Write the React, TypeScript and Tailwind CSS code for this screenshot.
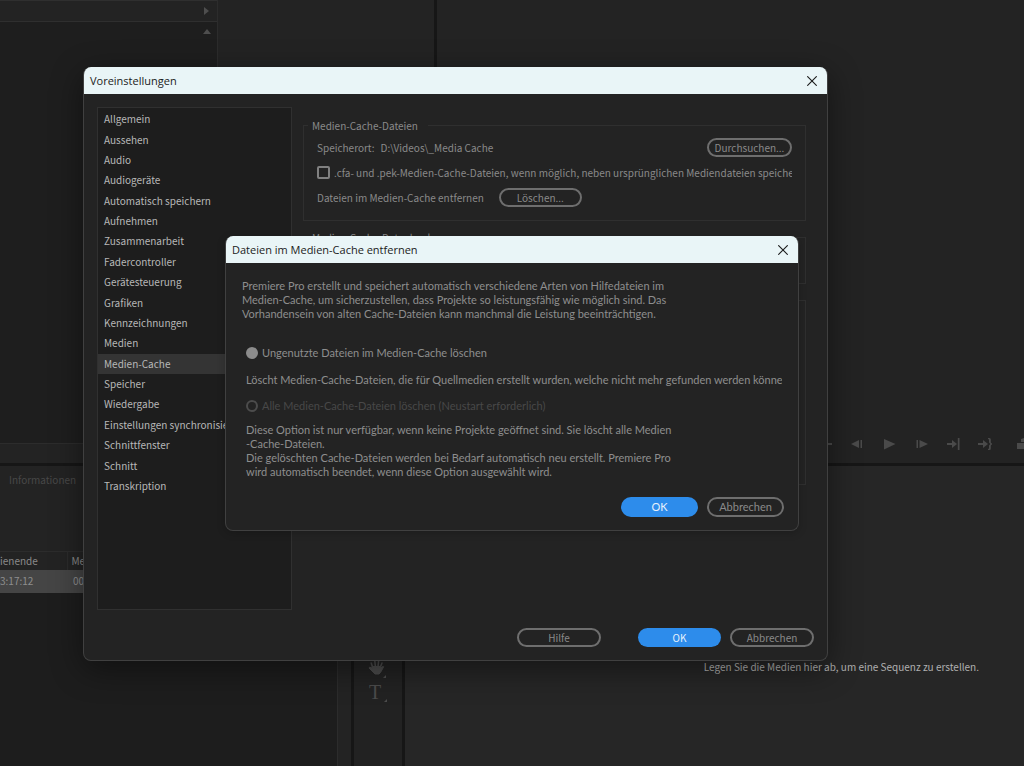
import React from "react";

const font = "font-['Noto_Sans_CJK_SC','Noto_Sans',sans-serif]";

const categories = [
  "Allgemein",
  "Aussehen",
  "Audio",
  "Audiogeräte",
  "Automatisch speichern",
  "Aufnehmen",
  "Zusammenarbeit",
  "Fadercontroller",
  "Gerätesteuerung",
  "Grafiken",
  "Kennzeichnungen",
  "Medien",
  "Medien-Cache",
  "Speicher",
  "Wiedergabe",
  "Einstellungen synchronisieren",
  "Schnittfenster",
  "Schnitt",
  "Transkription",
];

function PillButton({
  children,
  size,
  primary = false,
}: {
  children: React.ReactNode;
  size: string;
  primary?: boolean;
}) {
  const look = primary
    ? "bg-[#2d8ceb] text-[#e6f1fc]"
    : "border-2 border-[#6e6e6e] text-[#8a8a8a]";
  return (
    <button
      type="button"
      className={`flex shrink-0 items-center justify-center rounded-full leading-4 ${look} ${size}`}
    >
      {children}
    </button>
  );
}

function TitleBar({ title, id }: { title: string; id: string }) {
  return (
    <header className="flex h-[27px] shrink-0 items-center justify-between bg-[#e9f5f7] pr-2.5 pl-1.5 text-[#1b1b1b]">
      <h2 id={id} className="font-['Open_Sans',sans-serif] text-[11px] leading-4">
        {title}
      </h2>
      <button type="button" aria-label="Schließen" className="flex">
        <svg width="10" height="10" viewBox="0 0 10 10" fill="none" stroke="currentColor" strokeWidth="1.1">
          <path d="M0.3 0.3 9.7 9.7M9.7 0.3 0.3 9.7" />
        </svg>
      </button>
    </header>
  );
}

function Group({
  title,
  size,
  children,
}: {
  title: string;
  size: string;
  children?: React.ReactNode;
}) {
  return (
    <fieldset className={`min-w-0 border border-[#2f2f2f] pr-[13px] pl-[13px] ${size}`}>
      <legend className="-ml-[9px] h-4 pr-2.5 pl-1 leading-[18px]">{title}</legend>
      <div className="flex flex-col pt-0.5">{children}</div>
    </fieldset>
  );
}

function Transport() {
  return (
    <div className="flex h-4 items-center justify-end gap-4 text-[#4a4a4a]">
      <button type="button" aria-label="Zum In-Point" className="flex">
        <svg width="17" height="16" viewBox="0 0 17 16" fill="currentColor">
          <path d="M1 2h1.6v12H1zM4 8l5-4v3h7v2H9v3z" />
        </svg>
      </button>
      <button type="button" aria-label="Schritt zurück" className="flex">
        <svg width="16" height="16" viewBox="0 0 16 16" fill="currentColor">
          <path d="M2 8l8-4v8zM11.5 4h1.500v8h-1.500z" />
        </svg>
      </button>
      <button type="button" aria-label="Wiedergabe" className="flex">
        <svg width="16" height="16" viewBox="0 0 16 16" fill="currentColor">
          <path d="M3 3v10.500L14.500 8z" />
        </svg>
      </button>
      <button type="button" aria-label="Schritt vor" className="flex">
        <svg width="16" height="16" viewBox="0 0 16 16" fill="currentColor">
          <path d="M3.5 4H5v8H3.5zM6.5 4v8L15 8z" />
        </svg>
      </button>
      <button type="button" aria-label="Zum Out-Point" className="flex">
        <svg width="16" height="16" viewBox="0 0 16 16" fill="currentColor">
          <path d="M2 7h5V4l5 4-5 4V9H2zM12.8 2h1.7v12h-1.7z" />
        </svg>
      </button>
      <button type="button" aria-label="Zum Ende" className="flex">
        <svg width="16" height="16" viewBox="0 0 16 16" fill="currentColor">
          <path d="M1 7h5V4l5 4-5 4V9H1zM11 2h1.500q1.300 0 1.300 1.500V6.500L15.300 8l-1.500 1.500V12.500q0 1.500-1.300 1.500H11v-1.200h1V9.500L13.300 8 12 6.500V3.200h-1z" />
        </svg>
      </button>
      <button type="button" aria-label="Herausnehmen" className="ml-2 flex">
        <svg width="7" height="16" viewBox="0 0 7 16" fill="currentColor">
          <path d="M0 7h7v6H0zM4 3l3-1v4H4z" />
        </svg>
      </button>
    </div>
  );
}

function Workspace() {
  return (
    <div className="flex min-h-screen flex-col overflow-hidden bg-[#161616]">
      <div className="flex flex-[463_1_0px] gap-[3px]">
        <section className="flex w-[434px] flex-col bg-[#232323]">
          <div className="flex flex-1">
            <div className="flex w-[218px] flex-col border-r border-[#2c2c2c] bg-[#1e1e1e]">
              <div className="flex h-[22px] items-center justify-end border-t border-b border-[#2f2f2f] bg-[#232323] pr-2">
                <svg width="5" height="8" viewBox="0 0 5 8" fill="#4e4e4e">
                  <path d="M0 0v8l5-4z" />
                </svg>
              </div>
              <div className="flex justify-end pt-[7px] pr-1.5">
                <svg width="8" height="5" viewBox="0 0 8 5" fill="#4e4e4e">
                  <path d="M0 5h8L4 0z" />
                </svg>
              </div>
            </div>
          </div>
          <div className="h-5 border-t border-[#2c2c2c]" />
        </section>
        <section className="flex flex-1 flex-col justify-end bg-[#232323] pb-[11px]">
          <Transport />
        </section>
      </div>
      <div className="h-[3px]" />
      <div className="flex flex-[300_1_0px] gap-[3px]">
        <section className="flex w-[351px] flex-col bg-[#232323]">
          <h3 className="h-[85px] pt-1.5 pl-[9px] leading-4 text-[#484848]">Informationen</h3>
          <div className="mr-[13px] flex-1 border-r border-[#2c2c2c] bg-[#1d1d1d]">
            <table className="w-full table-fixed border-collapse text-left">
              <thead>
                <tr className="h-[18px] border-t border-[#2c2c2c] bg-[#232323] text-[#8a8a8a]">
                  <th className="w-[67px] border-r border-[#2c2c2c] font-normal leading-4">ienende</th>
                  <th className="pl-1 font-normal leading-4">Medienstart</th>
                </tr>
              </thead>
              <tbody>
                <tr className="h-[23px] bg-[#454545] text-[#8e8e8e]">
                  <td className="leading-4">3:17:12</td>
                  <td className="pl-1.5 leading-4">00:00:00:00</td>
                </tr>
              </tbody>
            </table>
          </div>
        </section>
        <section className="flex w-12 flex-col items-center bg-[#222222] pt-[192px] text-[#4c4c4c]">
          <button type="button" aria-label="Hand-Werkzeug" className="flex">
            <svg width="20" height="20" viewBox="0 0 20 20" fill="none" stroke="currentColor" strokeLinecap="round">
              <path strokeWidth="1.6" d="M4.700 9.500 3.200 5M7.400 8.500 6.800 3M10 8.500 10.600 3M12.200 9.500 14 5" />
              <path fill="currentColor" strokeWidth="1" strokeLinejoin="round" d="M4.500 8.500h8l.5 1.500 1.500-1.500 1.200.2-3.200 5.800-1.500 1.500H7L5 14 1 10l.6-.8 3.400 1z" />
              <path fill="currentColor" stroke="none" d="M18 17v3h-3z" />
            </svg>
          </button>
          <button type="button" aria-label="Text-Werkzeug" className="mt-1 flex items-end gap-0.5 font-['Liberation_Serif',serif] text-xl leading-5">
            T
            <svg width="4" height="4" viewBox="0 0 4 4" fill="currentColor">
              <path d="M4 1v3H1z" />
            </svg>
          </button>
        </section>
        <section className="flex flex-1 justify-end bg-[#262626]">
          <p className="pt-[193px] pr-[45px] leading-4 text-[#b0b0b0]">
            Legen Sie die Medien hier ab, um eine Sequenz zu erstellen.
          </p>
        </section>
      </div>
    </div>
  );
}

function Preferences() {
  return (
    <div
      role="dialog"
      aria-labelledby="preferences-title"
      className="absolute top-[67px] left-[83px] flex w-[745px] flex-col overflow-hidden rounded-lg border border-t-0 border-[#404040] bg-[#232323] text-[#8a8a8a] shadow-[0_8px_32px_rgba(0,0,0,0.45)]"
    >
      <TitleBar id="preferences-title" title="Voreinstellungen" />
      <div className="flex pt-[13px] pr-[21px] pl-[13px]">
        <nav className="h-[503px] w-[195px] shrink-0 border border-[#303030] bg-[#1d1d1d] pt-px">
          <ul className="flex h-[387px] flex-col text-[#b8b8b8]">
            {categories.map((name) => (
              <li key={name} className="flex flex-1">
                <a
                  href="#"
                  aria-current={name === "Medien-Cache" ? "page" : undefined}
                  className="flex flex-1 items-center pl-1.5 leading-4 whitespace-nowrap aria-[current=page]:bg-[#343434]"
                >
                  {name}
                </a>
              </li>
            ))}
          </ul>
        </nav>
        <div className="flex min-w-0 flex-1 flex-col gap-2 pt-2.5 pl-[11px]">
          <Group title="Medien-Cache-Dateien" size="h-[104px]">
            <div className="flex h-[25px] items-center justify-between">
              <p className="flex gap-1.5 leading-4">
                <span>Speicherort:</span>
                <span>D:\Videos\_Media Cache</span>
              </p>
              <PillButton size="h-[19px] w-[85px]">Durchsuchen...</PillButton>
            </div>
            <label className="flex h-[25px] items-center gap-1 overflow-hidden whitespace-nowrap">
              <input
                type="checkbox"
                className="size-[13px] shrink-0 appearance-none rounded-[2px] border-2 border-[#808080]"
              />
              .cfa- und .pek-Medien-Cache-Dateien, wenn möglich, neben ursprünglichen Mediendateien speichern
            </label>
            <div className="flex h-[25px] items-center gap-[15px]">
              <p className="leading-4">Dateien im Medien-Cache entfernen</p>
              <PillButton size="h-[19px] w-[83px]">Löschen...</PillButton>
            </div>
          </Group>
          <Group title="Medien-Cache-Datenbank" size="h-[55px]" />
          <Group title="Medien-Cache-Verwaltung" size="h-[193px]" />
        </div>
      </div>
      <footer className="flex justify-end px-[13px] pt-[18px] pb-[13px]">
        <div className="flex gap-[37px]">
          <PillButton size="h-[19px] w-[84px]">Hilfe</PillButton>
          <div className="flex gap-[9px]">
            <PillButton primary size="h-[19px] w-[83px]">OK</PillButton>
            <PillButton size="h-[19px] w-[84px]">Abbrechen</PillButton>
          </div>
        </div>
      </footer>
    </div>
  );
}

function ClearCache() {
  return (
    <div
      role="dialog"
      aria-labelledby="clear-cache-title"
      className="absolute top-[236px] left-[225px] flex w-[574px] flex-col overflow-hidden rounded-lg border border-t-0 border-[#404040] bg-[#232323] font-['Lato',sans-serif] text-[11px] text-[#8e8e8e] shadow-[0_2px_8px_rgba(0,0,0,0.2)]"
    >
      <TitleBar id="clear-cache-title" title="Dateien im Medien-Cache entfernen" />
      <div className="flex flex-col px-4 pt-4 leading-[14px]">
        <p>
          Premiere Pro erstellt und speichert automatisch verschiedene Arten von Hilfedateien im
          <br />
          Medien-Cache, um sicherzustellen, dass Projekte so leistungsfähig wie möglich sind. Das
          <br />
          Vorhandensein von alten Cache-Dateien kann manchmal die Leistung beeinträchtigen.
        </p>
        <div className="flex flex-col pt-6 pl-1">
          <label className="flex h-4 items-center gap-1">
            <input
              type="radio"
              name="scope"
              defaultChecked
              className="size-3 shrink-0 appearance-none rounded-full bg-[#8c8c8c]"
            />
            Ungenutzte Dateien im Medien-Cache löschen
          </label>
          <p className="h-[37px] overflow-hidden pt-3 whitespace-nowrap">
            Löscht Medien-Cache-Dateien, die für Quellmedien erstellt wurden, welche nicht mehr gefunden werden können.
          </p>
          <label className="flex h-4 items-center gap-1 text-[#484848]">
            <input
              type="radio"
              name="scope"
              disabled
              className="size-3 shrink-0 appearance-none rounded-full border-2 border-[#4c4c4c]"
            />
            Alle Medien-Cache-Dateien löschen (Neustart erforderlich)
          </label>
          <p className="pt-[9px]">
            Diese Option ist nur verfügbar, wenn keine Projekte geöffnet sind. Sie löscht alle Medien
            <br />
            -Cache-Dateien.
            <br />
            Die gelöschten Cache-Dateien werden bei Bedarf automatisch neu erstellt. Premiere Pro
            <br />
            wird automatisch beendet, wenn diese Option ausgewählt wird.
          </p>
        </div>
      </div>
      <footer className="flex justify-end gap-[9px] px-3.5 pt-[18px] pb-[13px]">
        <PillButton primary size="h-5 w-[77px]">OK</PillButton>
        <PillButton size="h-5 w-[77px]">Abbrechen</PillButton>
      </footer>
    </div>
  );
}

export default function App() {
  return (
    <main className={`relative min-h-screen overflow-hidden text-[10px] ${font}`}>
      <Workspace />
      <Preferences />
      <ClearCache />
    </main>
  );
}
